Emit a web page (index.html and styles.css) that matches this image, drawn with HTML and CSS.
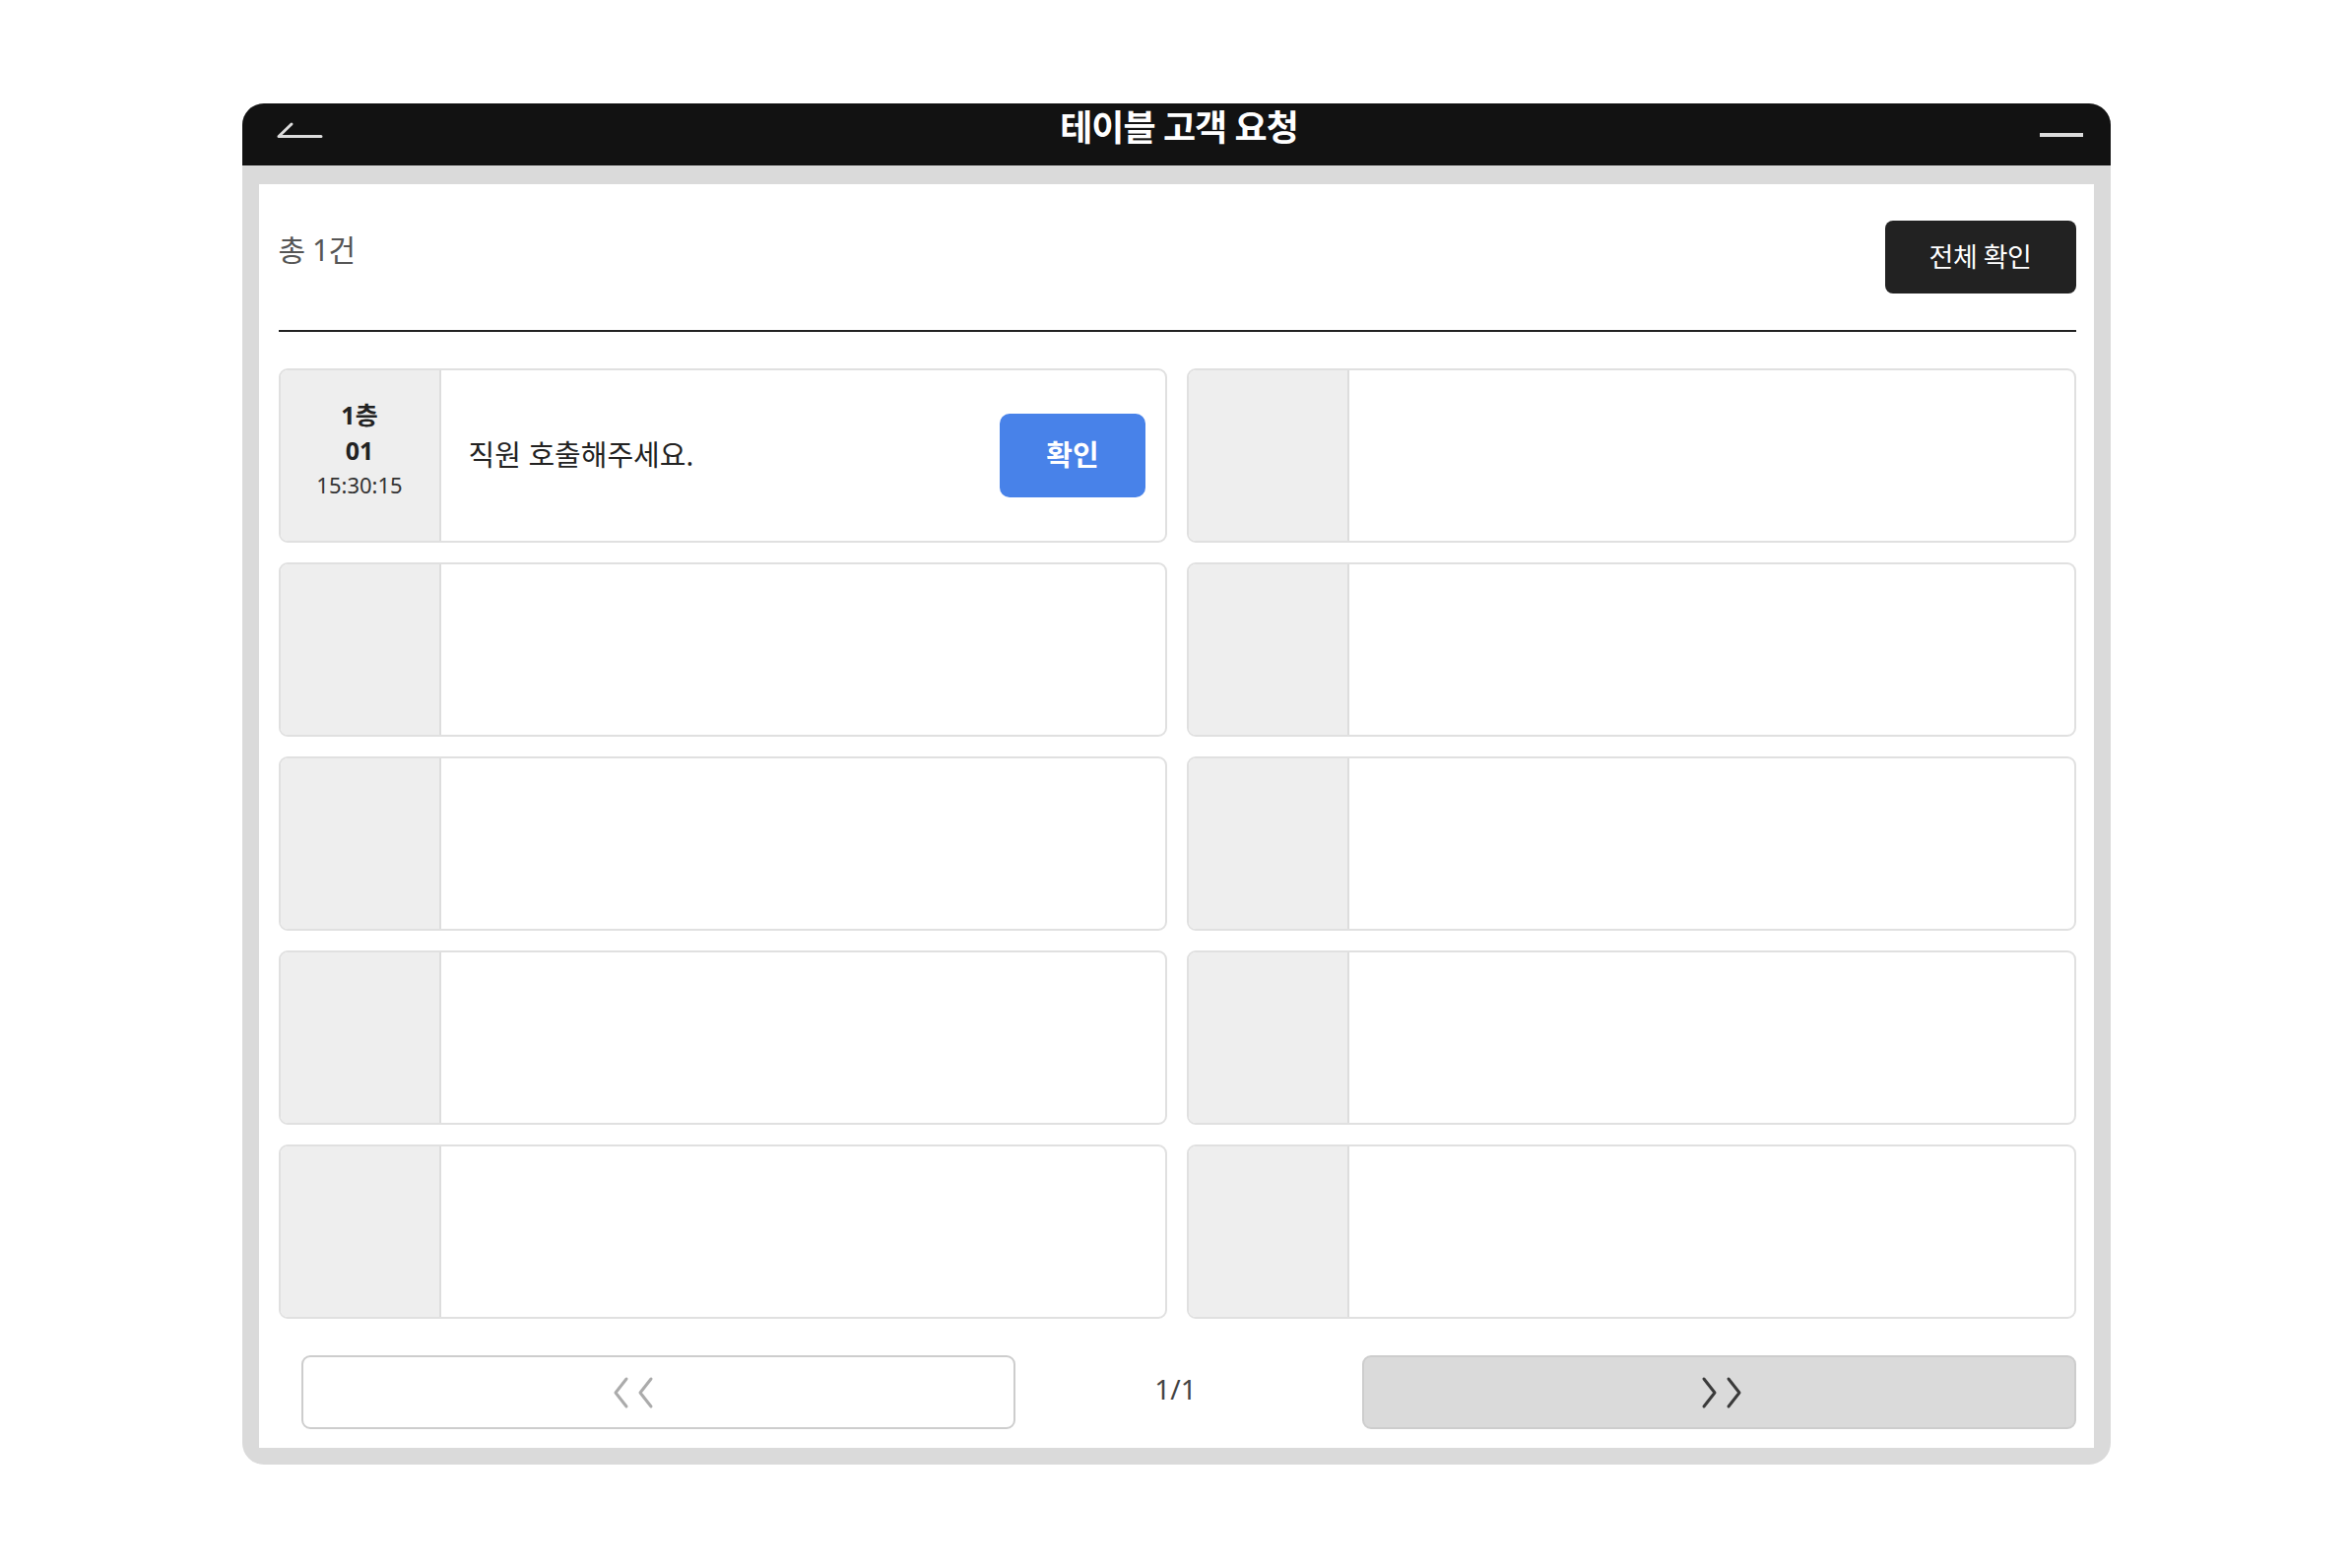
FILE: index.html
```html
<!DOCTYPE html>
<html lang="ko">
<head>
  <meta charset="UTF-8">
  <meta name="viewport" content="width=device-width, initial-scale=1.0">
  <title>테이블 고객 요청</title>
  <link rel="stylesheet" href="styles.css">
</head>
<body>
  <div class="frame">
    <div class="titlebar">
      <button class="icon-btn back-btn" aria-label="뒤로">
        <svg width="48" height="18" viewBox="0 0 48 18">
          <path d="M3 15.5 H46 M3 15.5 L16 3" fill="none" stroke="#dcdcdc" stroke-width="3" stroke-linecap="round"/>
        </svg>
      </button>
      <h1 class="title">테이블 고객 요청</h1>
      <button class="icon-btn min-btn" aria-label="최소화"><span class="minus"></span></button>
    </div>

    <div class="panel">
      <div class="summary">
        <div class="count">총 1건</div>
        <button class="all-btn">전체 확인</button>
      </div>

      <!-- 요청 목록 (2열 x 5행) -->
      <div class="request-grid">
        <div class="card">
          <div class="card-table">
            <div class="floor">1층</div>
            <div class="table-no">01</div>
            <div class="time">15:30:15</div>
          </div>
          <div class="card-body">
            <span class="message">직원 호출해주세요.</span>
            <button class="confirm-btn">확인</button>
          </div>
        </div>
        <div class="card"><div class="card-table"></div><div class="card-body"></div></div>
        <div class="card"><div class="card-table"></div><div class="card-body"></div></div>
        <div class="card"><div class="card-table"></div><div class="card-body"></div></div>
        <div class="card"><div class="card-table"></div><div class="card-body"></div></div>
        <div class="card"><div class="card-table"></div><div class="card-body"></div></div>
        <div class="card"><div class="card-table"></div><div class="card-body"></div></div>
        <div class="card"><div class="card-table"></div><div class="card-body"></div></div>
        <div class="card"><div class="card-table"></div><div class="card-body"></div></div>
        <div class="card"><div class="card-table"></div><div class="card-body"></div></div>
      </div>

      <div class="pagination">
        <button class="page-btn prev" aria-label="이전">
          <svg width="44" height="34" viewBox="0 0 44 34">
            <path d="M15 3 L4 17 L15 31 M40 3 L29 17 L40 31" fill="none" stroke="#ababab" stroke-width="3" stroke-linecap="round" stroke-linejoin="round"/>
          </svg>
        </button>
        <div class="page-info">1/1</div>
        <button class="page-btn next" aria-label="다음">
          <svg width="44" height="34" viewBox="0 0 44 34">
            <path d="M4 3 L15 17 L4 31 M29 3 L40 17 L29 31" fill="none" stroke="#3a3a3a" stroke-width="3" stroke-linecap="round" stroke-linejoin="round"/>
          </svg>
        </button>
      </div>
    </div>
  </div>
</body>
</html>
```

FILE: styles.css
```css
* {
  box-sizing: border-box;
}
body {
  margin: 0;
  min-height: 100vh;
  background-color: #fff;
  font-family: 'Noto Sans', 'Noto Sans CJK KR', sans-serif;
  color: #222;
  display: flex;
  justify-content: center;
  align-items: center;
}
button {
  font-family: inherit;
  cursor: pointer;
}
.frame {
  width: 1897px;
  height: 1382px;
  background-color: #dadada;
  border-radius: 22px;
  overflow: hidden;
  display: flex;
  flex-direction: column;
}
.titlebar {
  height: 63px;
  background-color: #121212;
  display: grid;
  grid-template-columns: 1fr auto 1fr;
  align-items: center;
  padding: 0 28px 0 34px;
}
.icon-btn {
  background: none;
  border: none;
  padding: 0;
  display: flex;
  align-items: center;
}
.back-btn {
  justify-self: start;
  margin-top: -10px;
}
.min-btn {
  justify-self: end;
}
.minus {
  display: block;
  width: 44px;
  height: 4px;
  background-color: #dcdcdc;
}
.title {
  margin: 0;
  color: #fff;
  font-size: 36px;
  font-weight: 700;
  letter-spacing: -1px;
  line-height: 1;
  margin-top: -14px;
}
.panel {
  flex: 1;
  background-color: #fff;
  margin: 19px 17px 17px;
  padding: 0 18px 19px 20px;
  display: flex;
  flex-direction: column;
}
.summary {
  display: flex;
  justify-content: space-between;
  align-items: flex-start;
  padding: 37px 0;
  border-bottom: 2px solid #222;
}
.count {
  font-size: 30px;
  color: #555;
  line-height: 44px;
  padding-top: 8px;
  letter-spacing: -0.5px;
}
.all-btn {
  width: 194px;
  height: 74px;
  border: none;
  border-radius: 8px;
  background-color: #222;
  color: #fff;
  font-size: 27px;
  letter-spacing: -0.5px;
  padding: 0 0 4px;
}
.request-grid {
  margin-top: 37px;
  display: grid;
  grid-template-columns: 1fr 1fr;
  grid-template-rows: repeat(5, 177px);
  gap: 20px;
}
.card {
  display: flex;
  border: 2px solid #e0e0e0;
  border-radius: 9px;
  overflow: hidden;
  background-color: #fff;
}
.card-table {
  width: 163px;
  flex-shrink: 0;
  background-color: #eee;
  border-right: 2px solid #ddd;
  display: flex;
  flex-direction: column;
  justify-content: center;
  align-items: center;
  padding-bottom: 13px;
}
.floor,
.table-no {
  font-size: 25px;
  font-weight: 700;
  line-height: 36px;
  color: #222;
}
.time {
  font-size: 22px;
  line-height: 34px;
  color: #333;
}
.card-body {
  flex: 1;
  display: flex;
  align-items: center;
  justify-content: space-between;
  padding: 0 20px 0 28px;
}
.message {
  font-size: 29px;
  color: #222;
  margin-top: -6px;
}
.confirm-btn {
  width: 148px;
  height: 85px;
  border: none;
  border-radius: 10px;
  background-color: #4882e9;
  color: #fff;
  font-size: 29px;
  font-weight: 700;
  padding: 0 0 6px;
}
.pagination {
  margin-top: 37px;
  display: flex;
  align-items: center;
}
.page-btn {
  width: 725px;
  height: 75px;
  border: 2px solid #cdcdcd;
  border-radius: 9px;
  display: flex;
  justify-content: center;
  align-items: center;
  padding: 0;
}
.page-btn.prev {
  margin-left: 23px;
  padding-right: 50px;
  background-color: #fff;
}
.page-btn.next {
  padding-left: 6px;
  background-color: #dadada;
}
.page-info {
  flex: 1;
  text-align: center;
  padding-right: 26px;
  padding-bottom: 7px;
  font-size: 28px;
  color: #444;
}
```
